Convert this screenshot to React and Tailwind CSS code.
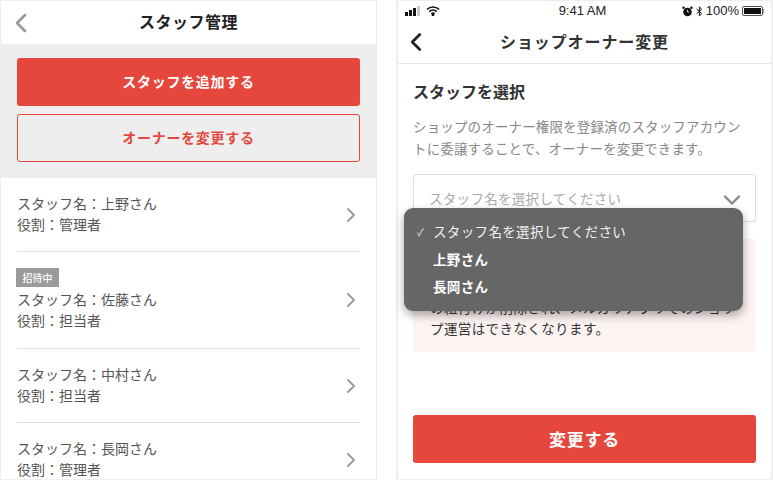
import { ChevronLeft, ChevronRight, ChevronDown } from 'lucide-react'

const font = "font-['Noto_Sans_CJK_JP','Noto_Sans',sans-serif]"

const staff = [
  { name: '上野', role: '管理者', h: 'h-[74px]' },
  { name: '佐藤', role: '担当者', invited: true, h: 'h-[97px]' },
  { name: '中村', role: '担当者', h: 'h-[74px]' },
  { name: '長岡', role: '管理者', h: 'h-[74px]' },
]

function StaffRow({ name, role, invited, h, last }) {
  return (
    <div className={`${h} flex items-center justify-between pr-[1px] ${last ? '' : 'border-b border-[#dddddd]'}`}>
      <div className="pb-[2px] text-[14px] leading-[21px] text-[#555555]">
        {invited && (
          <span className="block w-[43px] h-[19px] mb-[2px] -ml-[1px] bg-[#9b9b9b] text-white text-[10px] leading-[19px] text-center font-medium">招待中</span>
        )}
        <p>スタッフ名：{name}さん</p>
        <p>役割：{role}</p>
      </div>
      <ChevronRight size={24} strokeWidth={1.8} className="text-[#999999] -mr-[4px]" />
    </div>
  )
}

function StatusBar() {
  return (
    <div className="h-[20px] flex items-center justify-between pl-[7px] pr-[7px] text-[#222222] font-['Liberation_Sans',sans-serif]">
      <div className="flex items-center gap-[6px] w-[120px]">
        <div className="flex items-end gap-[1px] h-[10px]">
          <span className="w-[3px] h-[4px] bg-[#111111]" />
          <span className="w-[3px] h-[6px] bg-[#111111]" />
          <span className="w-[3px] h-[8px] bg-[#111111]" />
          <span className="w-[3px] h-[10px] bg-[#cccccc]" />
        </div>
        <svg width="14" height="10" viewBox="0 0 14 10" fill="none" stroke="#111111" strokeWidth="1.5">
          <path d="M1 3.4C4.4 .3 9.6 .3 13 3.4" />
          <path d="M3.2 5.6c2.2-2 5.4-2 7.6 0" />
          <path d="M5.3 7.6c1-.8 2.4-.8 3.4 0" />
          <circle cx="7" cy="9" r=".7" fill="#111111" />
        </svg>
      </div>
      <span className="text-[13px] -ml-[4px]">9:41 AM</span>
      <div className="flex items-center justify-end gap-[3px] w-[120px]">
        <svg width="11" height="11" viewBox="0 0 11 11">
          <circle cx="5.5" cy="6" r="4.3" fill="#111111" />
          <circle cx="1.6" cy="1.8" r="1.3" fill="#111111" />
          <circle cx="9.4" cy="1.8" r="1.3" fill="#111111" />
          <path d="M5.5 3.8V6h1.8" stroke="#ffffff" strokeWidth=".8" fill="none" />
        </svg>
        <svg width="7" height="11" viewBox="0 0 7 11" fill="none" stroke="#111111" strokeWidth="1">
          <path d="M.6 3l5 4.6-2.2 2.4V1l2.2 2.2-5 4.6" />
        </svg>
        <span className="text-[13px]">100%</span>
        <div className="flex items-center">
          <div className="w-[21px] h-[10px] border border-[#555555] p-[1px] rounded-[2px]">
            <div className="w-full h-full bg-[#111111]" />
          </div>
          <span className="w-[1px] h-[4px] bg-[#999999]" />
        </div>
      </div>
    </div>
  )
}

export default function App() {
  return (
    <div className={`${font} w-[773px] h-[480px] bg-white flex justify-between overflow-hidden`}>
      {/* staff list */}
      <div className="w-[377px] h-[480px] border border-[#eeeeee] flex flex-col overflow-hidden">
        <header className="h-[43px] shrink-0 relative flex items-center justify-center pb-[3px]">
          <ChevronLeft size={32} strokeWidth={2} className="absolute left-[4px] top-[6px] text-[#999999]" />
          <h1 className="text-[16px] font-bold text-[#222222] tracking-[0.5px]">スタッフ管理</h1>
        </header>
        <div className="h-[134px] shrink-0 bg-[#eeeeee] px-[16px] pt-[14px] flex flex-col gap-[8px]">
          <button className="h-[48px] pb-[2px] rounded-[3px] bg-[#e5473d] text-white text-[14px] font-bold tracking-[0.7px]">スタッフを追加する</button>
          <button className="h-[48px] pb-[2px] rounded-[3px] border border-[#e5473d] text-[#e5473d] text-[14px] font-bold tracking-[0.7px]">オーナーを変更する</button>
        </div>
        <div className="pl-[16px] pr-[16px]">
          {staff.map((s, i) => (
            <StaffRow key={s.name} {...s} last={i === staff.length - 1} />
          ))}
        </div>
      </div>

      {/* owner change */}
      <div className="relative w-[377px] h-[480px] border-x-2 border-y border-[#eeeeee] flex flex-col">
        <StatusBar />
        <header className="h-[43px] shrink-0 relative flex items-center justify-center border-b border-[#e8e8e8] pb-[3px]">
          <ChevronLeft size={30} strokeWidth={2.2} className="absolute left-[3px] top-[6px] text-[#222222]" />
          <h1 className="text-[16px] font-bold text-[#333333] tracking-[0.9px]">ショップオーナー変更</h1>
        </header>
        <div className="flex-1 px-[15px] flex flex-col">
          <h2 className="mt-[16px] text-[16px] leading-[22px] font-bold text-[#333333]">スタッフを選択</h2>
          <p className="mt-[13px] pr-[14px] text-[13.5px] leading-[22px] text-[#888888] tracking-[0.15px]">
            ショップのオーナー権限を登録済のスタッフアカウントに委譲することで、オーナーを変更できます。
          </p>
          <div className="mt-[15px] h-[48px] shrink-0 rounded-[3px] border border-[#dddddd] flex items-center justify-between pl-[15px] pr-[9px] text-[13.5px] text-[#aaaaaa] tracking-[0.3px]">
            <span>スタッフ名を選択してください</span>
            <ChevronDown size={28} strokeWidth={2} className="text-[#888888] mt-[3px]" />
          </div>
          <div className="mt-[17px] h-[113px] shrink-0 rounded-[3px] bg-[#fdf3f2] px-[17px] pt-[58px] text-[13.5px] leading-[21px] text-[#333333] tracking-[0.4px] whitespace-nowrap">
            <p>の紐付けが削除され、メルカリアプリでのショッ</p>
            <p>プ運営はできなくなります。</p>
          </div>
          <button className="mt-[63px] h-[48px] pb-[1px] shrink-0 rounded-[3px] bg-[#e5473d] text-white text-[17px] font-bold tracking-[0.7px]">変更する</button>
        </div>

        {/* select menu open */}
        <div className="absolute left-[6px] top-[207px] w-[339px] h-[103px] rounded-[9px] bg-[#666666] shadow-[0_4px_10px_rgba(0,0,0,0.35)] pt-[10px] text-[13.5px] text-[#f2f2f2] tracking-[0.35px]">
          <div className="relative h-[28px] leading-[27px] pl-[29px]">
            <span className="absolute left-[13px] text-[10px]">✓</span>
            スタッフ名を選択してください
          </div>
          <div className="h-[27px] leading-[27px] pl-[29px] font-bold text-white">上野さん</div>
          <div className="h-[27px] leading-[27px] pl-[29px] font-bold text-white">長岡さん</div>
        </div>
      </div>
    </div>
  )
}
